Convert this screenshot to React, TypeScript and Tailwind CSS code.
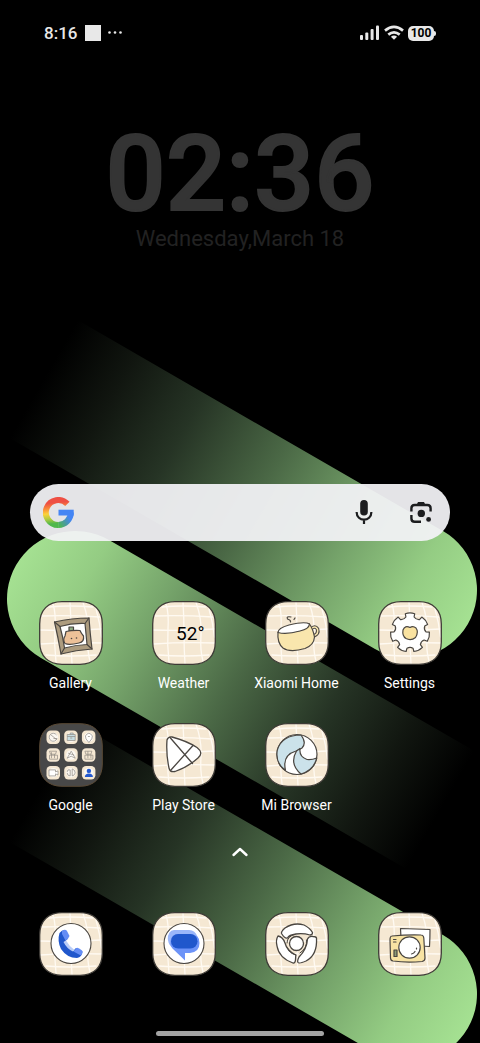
import type { ReactNode } from "react";

function Wallpaper() {
  return (
    <svg
      aria-hidden="true"
      viewBox="0 0 480 1043"
      preserveAspectRatio="xMidYMid slice"
      className="absolute inset-0 h-full w-full"
    >
      <defs>
        <linearGradient id="ray" gradientUnits="userSpaceOnUse" x1="68" x2="-422" y1="0" y2="0">
          <stop offset="0" stopColor="#a5e192" />
          <stop offset="0.14" stopColor="#94cc83" />
          <stop offset="0.3" stopColor="#75a36a" />
          <stop offset="0.5" stopColor="#4b6946" />
          <stop offset="0.7" stopColor="#263425" />
          <stop offset="0.86" stopColor="#111610" />
          <stop offset="1" stopColor="#000000" />
        </linearGradient>
      </defs>
      <g fill="url(#ray)">
        <path d="M-422 -68H0A68 68 0 0 1 0 68H-422Z" transform="translate(409 590) rotate(30)" />
        <path d="M-422 -68H0A68 68 0 0 1 0 68H-422Z" transform="translate(75 599) rotate(210)" />
        <path d="M-422 -68H0A68 68 0 0 1 0 68H-422Z" transform="translate(409 994) rotate(30)" />
      </g>
    </svg>
  );
}

function StatusBar() {
  return (
    <header className="flex h-[66px] items-center justify-between px-11 text-[#e8e8e8]">
      <div className="flex items-center gap-2">
        <span className="text-[17px] font-medium leading-5">8:16</span>
        <svg width="38" height="16" viewBox="0 0 38 16" fill="currentColor" aria-hidden="true">
          <rect width="16" height="16" />
          <circle cx="24.500" cy="7.500" r="1.300" />
          <circle cx="30" cy="7.500" r="1.300" />
          <circle cx="35.500" cy="7.500" r="1.300" />
        </svg>
      </div>
      <div className="flex items-center gap-1">
        <svg width="20" height="16" viewBox="0 0 20 16" fill="currentColor" aria-hidden="true">
          <rect x="0" y="10" width="3" height="5" rx="1" />
          <rect x="5.300" y="7.500" width="3" height="7.500" rx="1" />
          <rect x="10.600" y="4" width="3" height="11" rx="1" />
          <rect x="16" y="0.500" width="3" height="14.500" rx="1" />
        </svg>
        <svg width="20" height="16" viewBox="0 0 20 16" fill="none" stroke="currentColor" strokeWidth="2.700" aria-hidden="true">
          <path d="M1 5.600Q10 -1.800 19 5.600" />
          <path d="M4.300 9.600Q10 5 15.700 9.600" />
          <path d="M10 14.800L6.900 11.700Q10 9.200 13.100 11.700Z" fill="currentColor" stroke="none" />
        </svg>
        <div className="flex items-center">
          <span className="flex h-[15px] w-[26px] items-center justify-center rounded-[5px] bg-[#e8e8e8] text-[12px] font-bold leading-none text-black">
            100
          </span>
          <span className="h-[5px] w-[2px] rounded-r-full bg-[#e8e8e8]" />
        </div>
      </div>
    </header>
  );
}

function Clock() {
  return (
    <section className="flex flex-col items-center pt-[55px]">
      <time className="text-[106px] font-medium leading-[106px] text-[#343434] [-webkit-text-stroke:2px_#343434]">02:36</time>
      <p className="text-[22px] leading-6 text-[#222222]">Wednesday,March 18</p>
    </section>
  );
}

function SearchBar() {
  return (
    <form
      className="mx-[30px] flex h-[57px] items-center rounded-full bg-[#f2f2f5]/94 pl-[13px] pr-4"
      onSubmit={(e) => e.preventDefault()}
    >
      <svg width="31" height="31" viewBox="0 0 31 31" fill="none" strokeWidth="6" aria-hidden="true">
        <defs>
          <linearGradient id="g-left" gradientUnits="userSpaceOnUse" x1="12" y1="0" x2="15" y2="31">
            <stop offset="0.180" stopColor="#ee4f43" />
            <stop offset="0.350" stopColor="#f98a3a" />
            <stop offset="0.520" stopColor="#fdd23b" />
            <stop offset="0.680" stopColor="#b5cc3f" />
            <stop offset="0.850" stopColor="#4fb84c" />
          </linearGradient>
          <linearGradient id="g-right" gradientUnits="userSpaceOnUse" x1="15" y1="28" x2="26" y2="20">
            <stop offset="0" stopColor="#4fb84c" />
            <stop offset="0.500" stopColor="#4a9c9c" />
            <stop offset="1" stopColor="#4485f4" />
          </linearGradient>
        </defs>
        <path d="M24.400 6.900A12.500 12.500 0 1 0 15.500 28" stroke="url(#g-left)" />
        <path d="M15.200 28A12.500 12.500 0 0 0 27.800 15.500" stroke="url(#g-right)" />
        <path d="M15.500 12.700H30.700V18.500H15.500Z" fill="#4485f4" />
      </svg>
      <input aria-label="Search" type="text" className="h-full min-w-0 flex-1 bg-transparent px-3 text-base text-[#202124] outline-none" />
      <button type="button" aria-label="Voice search" className="mr-[21px] flex h-9 w-9 items-center justify-center">
        <svg width="24" height="28" viewBox="0 0 24 28" fill="none" stroke="#1c1d1f" strokeWidth="2.200">
          <rect x="8.200" y="1" width="7.600" height="15.500" rx="3.800" fill="#1c1d1f" stroke="none" />
          <path d="M4.600 13C4.600 23.300 19.400 23.300 19.400 13M12 20.500V25" />
        </svg>
      </button>
      <button type="button" aria-label="Search with camera" className="-mr-[5px] flex h-9 w-9 items-center justify-center">
        <svg width="24" height="24" viewBox="0 0 24 24" fill="none" stroke="#1c1d1f" strokeWidth="2.400">
          <path d="M2.400 10.500V7.300Q2.400 4 5.700 4H18.300Q21.600 4 21.600 7.300V10.500" />
          <path d="M2.400 14V17.500Q2.400 20.800 5.700 20.800H12" />
          <path d="M7.500 4L9 1H15L16.500 4Z" fill="#1c1d1f" stroke="none" />
          <circle cx="12.300" cy="12.400" r="3.700" fill="#1c1d1f" stroke="none" />
          <circle cx="19.600" cy="18.400" r="2.400" fill="#1c1d1f" stroke="none" />
        </svg>
      </button>
    </form>
  );
}

const TILE_SHAPE =
  "M23 0.700H41C55 0.700 63.300 9 63.300 23V41C63.300 55 55 63.300 41 63.300H23C9 63.300 0.700 55 0.700 41V23C0.700 9 9 0.700 23 0.700Z";

function Tile({ children }: { children?: ReactNode }) {
  return (
    <svg width="64" height="64" viewBox="0 0 64 64" fill="none" strokeLinejoin="round" strokeLinecap="round" aria-hidden="true">
      <path d={TILE_SHAPE} fill="#f5e8d3" />
      <g stroke="#fffaf2" strokeWidth="1.300">
        <path d="M14 3Q17 12 16 28T17 61M31 1.500Q32 16 32 32T33 62.500M44 1.500Q50 18 49 34T51 60M57 8Q61 22 62.500 36" />
        <path d="M10 6Q30 4 54 6M3 15Q30 14 61 16M1.500 29Q30 30 62.500 28M1.500 43Q30 41 62.500 42M7 54Q30 56 57 54" />
      </g>
      <path d={TILE_SHAPE} stroke="#3d3a36" strokeWidth="1.300" />
      {children}
    </svg>
  );
}

const INK = "#4a4641";

function GalleryIcon() {
  return (
    <Tile>
      <g stroke={INK} strokeWidth="1.200">
        <path d="M15.500 21Q33 17 50 17Q51 32 53 48Q37 49 22 53Q19 36 15.500 21Z" fill="#ad9c7f" />
        <path d="M21 25.500Q33 22 46 22.500Q47 33 48 43.500Q36 44 25.500 47Q24 36 21 25.500Z" fill="#ffffff" />
        <path d="M15.500 21L21 25.500M50 17L46 22.500M53 48L48 43.500M22 53L25.500 47" />
        <path d="M30 30V26H34.500V30Z" fill="#8da982" />
        <path d="M27 30.500Q34 29 41 29.500Q42 32 44.500 35Q45.500 41 40 42Q30 44.500 26 42.500Q23.500 39 26 35Z" fill="#edc198" />
      </g>
      <circle cx="32.500" cy="37.500" r="0.800" fill={INK} />
      <circle cx="37.500" cy="37" r="0.800" fill={INK} />
    </Tile>
  );
}

function WeatherIcon() {
  return (
    <span className="relative block">
      <Tile />
      <span className="absolute inset-0 flex items-center justify-end pr-[11px] text-[19px] leading-none text-black">52°</span>
    </span>
  );
}

function HomeIcon() {
  return (
    <Tile>
      <g stroke={INK} strokeWidth="1.200">
        <path d="M46 28Q50 24 52.500 28Q54 33 48.500 35" strokeWidth="3.600" />
        <path d="M46 28Q50 24 52.500 28Q54 33 48.500 35" stroke="#f7e5b0" strokeWidth="1.500" />
        <path d="M13 31Q12 42 18 47Q25 52 40 47.500Q49 44 49.500 36Q48 28 44.500 23Q36 33 13 31Z" fill="#f9e6ad" />
        <path d="M13 31.500Q13 27 24 24Q40 20 44.500 23Q44 28 35 30Q21 34 13 31.500Z" fill="#ffffff" />
        <path d="M26 16Q21 15 22.500 18Q26 19 25.500 21M29 18.500L30 17" />
      </g>
    </Tile>
  );
}

const GEAR_TEETH = 7;

function gearPath() {
  const step = 360 / GEAR_TEETH;
  const pts: string[] = [];
  for (let i = 0; i < GEAR_TEETH; i++) {
    const at = (deg: number, r: number) => {
      const a = ((i * step + deg - 90) * Math.PI) / 180;
      return `${(32 + r * Math.cos(a)).toFixed(1)} ${(31.5 + r * Math.sin(a)).toFixed(1)}`;
    };
    pts.push(
      `${i ? "L" : "M"}${at(-15, 16)}L${at(-14, 19.4)}Q${at(0, 20.4)} ${at(14, 19.4)}L${at(15, 16)}Q${at(step / 2, 14)} ${at(step - 15, 16)}`,
    );
  }
  return pts.join("") + "Z";
}

function SettingsIcon() {
  return (
    <Tile>
      <path d={gearPath()} fill="#ffffff" stroke={INK} strokeWidth="1.200" />
      <path
        d="M32 26.500Q27 24 25 29Q24 35 28 37.500Q33 40 37.500 36.500Q41 31 38 27Q35 24.500 32 26.500Z"
        fill="#f9e2a0"
        stroke={INK}
        strokeWidth="1.200"
      />
    </Tile>
  );
}

const FOLDER_GLYPHS: ReactNode[] = [
  <path key="0" d="M10 4.500A4 4 0 1 0 10.500 8H7M4 4L10 9" />,
  <path key="1" d="M3 4H11V10H3ZM3 6H11M6 4V2.500H9V4M6 7.500H8" fill="#c6dde3" />,
  <path key="2" d="M7 12Q3 8 3.500 5.500Q7 0 10.500 5.500Q11 8 7 12ZM6 6H8" fill="#ffffff" />,
  <path key="3" d="M3 3H10L9 6H4ZM3 7H11V11H3ZM5 4V10M8 6V10" />,
  <path key="4" d="M3 10L7 3L11 10L7 8ZM4 5L10 7" fill="#ffffff" />,
  <path key="5" d="M3 3H10L9 6H4ZM3 7H11V11H3ZM6 3V10M9 6V10" />,
  <path key="6" d="M2.500 4H9V6L11.500 5V9L9 8V10H2.500Z" fill="#ffffff" />,
  <path key="7" d="M3 6Q3 3 6 4V10Q3 10 3 7M8 3Q11 4 11 7Q10 10 8 10Z" />,
  <g key="8" fill="#2459cf" stroke="none">
    <circle cx="7" cy="5" r="2.200" />
    <path d="M3 11Q3 7.500 7 7.500T11 11Z" />
  </g>,
];

function FolderIcon() {
  return (
    <svg width="64" height="64" viewBox="0 0 64 64" fill="none" strokeLinejoin="round" aria-hidden="true">
      <path d={TILE_SHAPE} fill="#484848" stroke="#5b4a35" strokeWidth="1" />
      {FOLDER_GLYPHS.map((glyph, i) => (
        <g key={i} transform={`translate(${7.5 + (i % 3) * 17.7} ${7.5 + Math.floor(i / 3) * 17.7})`}>
          <rect width="13.500" height="13.500" rx="4.200" fill="#f5e8d3" />
          {i !== 3 && i !== 5 && <circle cx="6.800" cy="6.800" r="4.800" fill="#fbf8f2" />}
          <g stroke="#8f8a83" strokeWidth="0.700">{glyph}</g>
        </g>
      ))}
    </svg>
  );
}

function PlayIcon() {
  return (
    <Tile>
      <g stroke={INK} strokeWidth="1.300">
        <path d="M15 17Q16 13.500 20 14Q35 18 45 24.500Q52 30 46 35Q36 44 23 48.500Q18 49.500 17 45Q14 31 15 17Z" fill="#ffffff" />
        <path d="M18 14.500L40.500 40.500M18.500 47.500L41 22.500" />
      </g>
    </Tile>
  );
}

function BrowserIcon() {
  return (
    <Tile>
      <g stroke={INK} strokeWidth="1.200">
        <circle cx="32" cy="31.500" r="20" fill="#ffffff" />
        <path d="M36 12Q42 20 37 25Q34 27 31 28Q17 32 20.500 47.500Q10 40 12.300 27Q17 12 36 12Z" fill="#cbe2ea" />
        <path d="M35 25.500Q34 34 42 36.500Q47 37 51.700 35Q49 47 36 51Q24 41 31.500 28Z" fill="#cbe2ea" />
      </g>
    </Tile>
  );
}

function PhoneIcon() {
  return (
    <Tile>
      <circle cx="32" cy="31.500" r="20" fill="#ffffff" stroke={INK} strokeWidth="1.100" />
      <path d="M20.500 21Q23 17.500 27 18L28.500 27L25.500 30Q28 36 34 39L37 36L43.500 39.500Q43 45 38 46Q28 46 22 37Q18 29 20.500 21Z" fill="#2057cc" />
      <path d="M23 19Q26 16.500 28 19L30.500 24Q29.500 27 26.500 28.500L23 22Z" fill="#648df5" />
      <path d="M34.500 39.500L37.500 36Q39 35 43 38.500Q44.500 40.500 42 43.500Q39 42 34.500 39.500Z" fill="#648df5" />
      <path d="M24.500 30L27 28.500Q30 34 35.500 38L34 39.500Q28 37 24.500 30Z" fill="#b9cdf8" />
    </Tile>
  );
}

function MessagesIcon() {
  return (
    <Tile>
      <circle cx="32" cy="31.500" r="20" fill="#ffffff" stroke={INK} strokeWidth="1.100" />
      <path d="M24 21H38Q47.500 22 47.500 31T38 41H33V48.500L20.500 36.500Q16.500 32 17 27Q18 21 24 21Z" fill="#6c93f8" />
      <path d="M22 18H37Q43.500 18 45 24.500Q42 22 38 22H25Q19.500 22.500 18.500 29V34Q13.500 27 17.500 20.500Q19 18 22 18Z" fill="#9ab6fa" />
      <rect x="19" y="22" width="26.500" height="14.500" rx="7.200" fill="#2057cc" />
    </Tile>
  );
}

function ChromeIcon() {
  return (
    <Tile>
      <g stroke={INK} strokeWidth="1.300" fill="#ffffff">
        <path d="M16.500 21.500Q16 19.500 20 16Q29 10 39 13Q45 16 47.500 20.500Q47.500 23 45 23Q38 21 31 22Q24 23 22.500 26Q20 27 16.500 21.500Z" />
        <path d="M13 24Q10.500 28 12 34Q14 46 28 51Q30 51.500 30.500 48L30.800 43Q22 39 20 31Q18 25 13 24Z" />
        <path d="M51.500 26Q52.500 43 41 49Q34 52 33 50.500Q32 49 34 45Q42 37 42.500 27Q44 24 48 24.500Q51 24.500 51.500 26Z" />
        <circle cx="31.500" cy="31.500" r="7" />
        <path d="M22 31Q22 24 30 22.500M41.500 28Q42.500 36 35 41M31 43Q25 42 22.500 36" fill="none" strokeWidth="1" />
      </g>
    </Tile>
  );
}

function CameraIcon() {
  return (
    <Tile>
      <g stroke={INK} strokeWidth="1.200">
        <path d="M22.500 16.500Q37 17 52 17.500Q52 26 51.500 34.500L43 34L23 26Z" fill="#ffffff" />
        <path d="M14 24Q30 22.500 43 23Q45.500 23 45.800 26L47 46Q47 49 44 49.500Q29 51 15 49Q12.500 48.500 12.500 46L12 28Q12 24 14 24Z" fill="#f8e3a3" />
        <circle cx="31.500" cy="35.500" r="10.700" fill="#ffffff" />
        <path d="M15.500 27.500H18M15.500 30H18M37 39.500Q36 41.500 33.500 42M38.500 36V37" />
        <rect x="16" y="38" width="3" height="6.500" fill="#8c9b73" />
      </g>
    </Tile>
  );
}

const APPS: { name: string; icon: ReactNode }[] = [
  { name: "Gallery", icon: <GalleryIcon /> },
  { name: "Weather", icon: <WeatherIcon /> },
  { name: "Xiaomi Home", icon: <HomeIcon /> },
  { name: "Settings", icon: <SettingsIcon /> },
  { name: "Google", icon: <FolderIcon /> },
  { name: "Play Store", icon: <PlayIcon /> },
  { name: "Mi Browser", icon: <BrowserIcon /> },
];

const DOCK: { name: string; icon: ReactNode }[] = [
  { name: "Phone", icon: <PhoneIcon /> },
  { name: "Messages", icon: <MessagesIcon /> },
  { name: "Chrome", icon: <ChromeIcon /> },
  { name: "Camera", icon: <CameraIcon /> },
];

export default function App() {
  return (
    <div className="relative min-h-screen overflow-hidden bg-black font-[Roboto,sans-serif]">
      <Wallpaper />
      <div className="relative flex min-h-screen flex-col">
        <StatusBar />
        <Clock />
        <main className="mt-auto">
          <SearchBar />
          <div className="mt-[60px] grid grid-cols-4 gap-y-[30px] px-[14px]">
            {APPS.map((app) => (
              <button key={app.name} type="button" className="flex flex-col items-center gap-2 text-white">
                {app.icon}
                <span className="whitespace-nowrap text-[14px] leading-5">{app.name}</span>
              </button>
            ))}
          </div>
          <button type="button" aria-label="All apps" className="mx-auto mt-[25px] flex h-6 w-10 items-center justify-center">
            <svg width="18" height="10" viewBox="0 0 18 10" fill="none" stroke="#ffffff" strokeWidth="2.400" strokeLinecap="round" strokeLinejoin="round">
              <path d="M2.500 8L9 2L15.500 8" />
            </svg>
          </button>
        </main>
        <nav aria-label="Dock" className="mt-12 grid grid-cols-4 px-[14px]">
          {DOCK.map((app) => (
            <button key={app.name} type="button" aria-label={app.name} className="flex justify-center">
              {app.icon}
            </button>
          ))}
        </nav>
        <div className="mx-auto mb-[7px] mt-[55px] h-[5px] w-[35%] rounded-full bg-[#a3a3a3]" />
      </div>
    </div>
  );
}
